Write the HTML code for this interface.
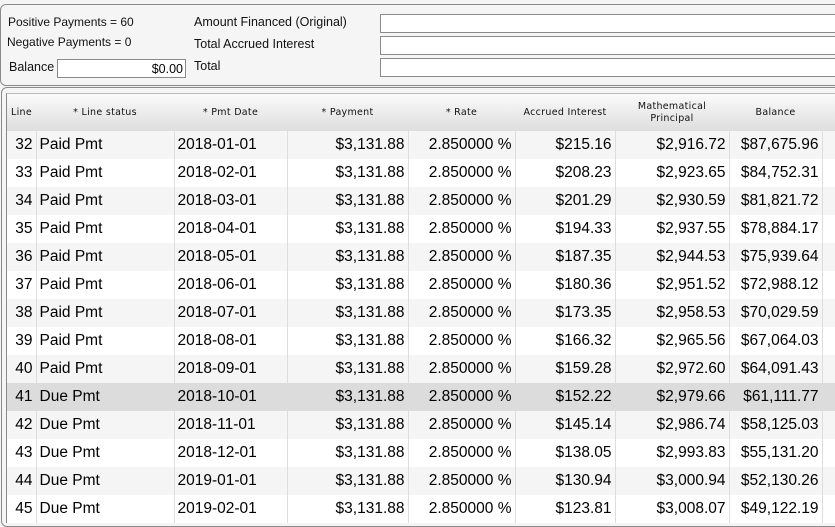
<!DOCTYPE html>
<html><head><style>
*{margin:0;padding:0;box-sizing:border-box}
body{width:835px;height:511px;overflow:hidden;background:#f4f4f4;font-family:"Liberation Sans",Arial,sans-serif;position:relative}
.top{position:absolute;left:0;top:4px;width:850px;height:82px;border:1px solid #8a8a8a;border-radius:6px;background:#f5f5f5}
.lbl{position:absolute;font-size:12.5px;color:#111}
.in{position:absolute;background:#fff;border:1px solid #8a8a8a;height:19px}
.tp{position:absolute;left:1px;top:87px;width:850px;height:440px;border:1px solid #8a8a8a;border-radius:6px;background:#f5f5f5}
.tbl{position:absolute;left:6px;top:93px;width:840px;height:430px;border-left:1px solid #8a8a8a;border-top:1px solid #bbb;background:#f5f5f5;overflow:hidden}
table{border-collapse:collapse;table-layout:fixed;position:absolute;left:0;top:0;width:845px}
th{height:37px;font-family:"DejaVu Sans",Verdana,sans-serif;font-weight:normal;font-size:9.5px;color:#111;background:linear-gradient(#fafafa,#dedede);letter-spacing:.3px;line-height:12px;padding:0}
td{height:28px;font-size:15.5px;color:#000;border-left:1px solid #ddd;padding:0 3px;white-space:nowrap;overflow:hidden}
td.r{text-align:right}
tr.g td{background:#f5f5f5}
tr.w td{background:#fff}
tr.s td{background:#dcdcdc}
</style></head><body>
<div class="top"></div>
<div class="lbl" style="left:8px;top:15px;font-size:12px">Positive Payments = 60</div>
<div class="lbl" style="left:7px;top:35px;font-size:12px">Negative Payments = 0</div>
<div class="lbl" style="left:9px;top:60px">Balance</div>
<div class="in" style="left:57px;top:59px;width:129px;text-align:right;font-size:12.5px;padding:2px 2px 0 0">$0.00</div>
<div class="lbl" style="left:194px;top:15px">Amount Financed (Original)</div>
<div class="lbl" style="left:194px;top:37px">Total Accrued Interest</div>
<div class="lbl" style="left:194px;top:59px">Total</div>
<div class="in" style="left:380px;top:14px;width:460px"></div>
<div class="in" style="left:380px;top:36px;width:460px"></div>
<div class="in" style="left:380px;top:58px;width:460px"></div>
<div class="tp"></div>
<div class="tbl"><table>
<colgroup><col style="width:29px"><col style="width:138px"><col style="width:113px"><col style="width:121px"><col style="width:107px"><col style="width:100px"><col style="width:114px"><col style="width:93px"><col style="width:30px"></colgroup>
<tr><th style="text-align:left;padding-left:4px">Line</th><th>* Line status</th><th>* Pmt Date</th><th>* Payment</th><th>* Rate</th><th>Accrued Interest</th><th>Mathematical<br>Principal</th><th>Balance</th><th></th></tr>
<tr class="g"><td class="r" style="border-left:none">32</td><td>Paid Pmt</td><td>2018-01-01</td><td class="r">$3,131.88</td><td class="r">2.850000 %</td><td class="r">$215.16</td><td class="r">$2,916.72</td><td class="r">$87,675.96</td><td></td></tr>
<tr class="w"><td class="r" style="border-left:none">33</td><td>Paid Pmt</td><td>2018-02-01</td><td class="r">$3,131.88</td><td class="r">2.850000 %</td><td class="r">$208.23</td><td class="r">$2,923.65</td><td class="r">$84,752.31</td><td></td></tr>
<tr class="g"><td class="r" style="border-left:none">34</td><td>Paid Pmt</td><td>2018-03-01</td><td class="r">$3,131.88</td><td class="r">2.850000 %</td><td class="r">$201.29</td><td class="r">$2,930.59</td><td class="r">$81,821.72</td><td></td></tr>
<tr class="w"><td class="r" style="border-left:none">35</td><td>Paid Pmt</td><td>2018-04-01</td><td class="r">$3,131.88</td><td class="r">2.850000 %</td><td class="r">$194.33</td><td class="r">$2,937.55</td><td class="r">$78,884.17</td><td></td></tr>
<tr class="g"><td class="r" style="border-left:none">36</td><td>Paid Pmt</td><td>2018-05-01</td><td class="r">$3,131.88</td><td class="r">2.850000 %</td><td class="r">$187.35</td><td class="r">$2,944.53</td><td class="r">$75,939.64</td><td></td></tr>
<tr class="w"><td class="r" style="border-left:none">37</td><td>Paid Pmt</td><td>2018-06-01</td><td class="r">$3,131.88</td><td class="r">2.850000 %</td><td class="r">$180.36</td><td class="r">$2,951.52</td><td class="r">$72,988.12</td><td></td></tr>
<tr class="g"><td class="r" style="border-left:none">38</td><td>Paid Pmt</td><td>2018-07-01</td><td class="r">$3,131.88</td><td class="r">2.850000 %</td><td class="r">$173.35</td><td class="r">$2,958.53</td><td class="r">$70,029.59</td><td></td></tr>
<tr class="w"><td class="r" style="border-left:none">39</td><td>Paid Pmt</td><td>2018-08-01</td><td class="r">$3,131.88</td><td class="r">2.850000 %</td><td class="r">$166.32</td><td class="r">$2,965.56</td><td class="r">$67,064.03</td><td></td></tr>
<tr class="g"><td class="r" style="border-left:none">40</td><td>Paid Pmt</td><td>2018-09-01</td><td class="r">$3,131.88</td><td class="r">2.850000 %</td><td class="r">$159.28</td><td class="r">$2,972.60</td><td class="r">$64,091.43</td><td></td></tr>
<tr class="s"><td class="r" style="border-left:none">41</td><td>Due Pmt</td><td>2018-10-01</td><td class="r">$3,131.88</td><td class="r">2.850000 %</td><td class="r">$152.22</td><td class="r">$2,979.66</td><td class="r">$61,111.77</td><td></td></tr>
<tr class="g"><td class="r" style="border-left:none">42</td><td>Due Pmt</td><td>2018-11-01</td><td class="r">$3,131.88</td><td class="r">2.850000 %</td><td class="r">$145.14</td><td class="r">$2,986.74</td><td class="r">$58,125.03</td><td></td></tr>
<tr class="w"><td class="r" style="border-left:none">43</td><td>Due Pmt</td><td>2018-12-01</td><td class="r">$3,131.88</td><td class="r">2.850000 %</td><td class="r">$138.05</td><td class="r">$2,993.83</td><td class="r">$55,131.20</td><td></td></tr>
<tr class="g"><td class="r" style="border-left:none">44</td><td>Due Pmt</td><td>2019-01-01</td><td class="r">$3,131.88</td><td class="r">2.850000 %</td><td class="r">$130.94</td><td class="r">$3,000.94</td><td class="r">$52,130.26</td><td></td></tr>
<tr class="w"><td class="r" style="border-left:none">45</td><td>Due Pmt</td><td>2019-02-01</td><td class="r">$3,131.88</td><td class="r">2.850000 %</td><td class="r">$123.81</td><td class="r">$3,008.07</td><td class="r">$49,122.19</td><td></td></tr>
</table></div>
</body></html>
